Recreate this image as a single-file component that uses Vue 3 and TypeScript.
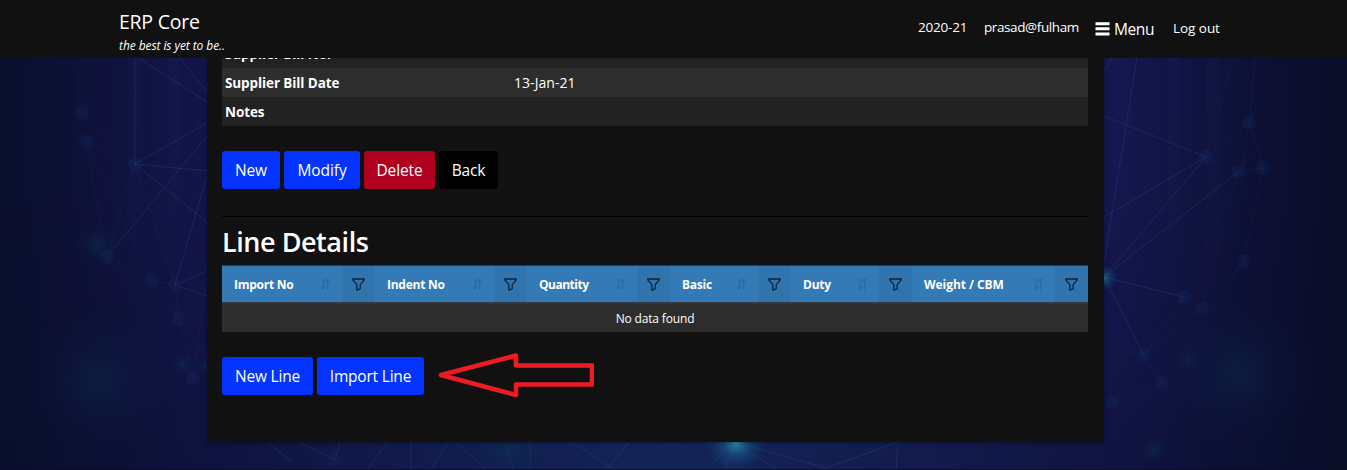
<script setup lang="ts">
interface Column {
  key: string
  label: string
}

interface Point {
  x: number
  y: number
}

const columns: Column[] = [
  { key: 'import', label: 'Import No' },
  { key: 'indent', label: 'Indent No' },
  { key: 'quantity', label: 'Quantity' },
  { key: 'basic', label: 'Basic' },
  { key: 'duty', label: 'Duty' },
  { key: 'weight', label: 'Weight / CBM' },
]

const details = [
  { label: 'Supplier Bill No.', value: '' },
  { label: 'Supplier Bill Date', value: '13-Jan-21' },
  { label: 'Notes', value: '' },
]

const nodes: Point[] = [
  { x: 86, y: 141 }, { x: 135, y: 164 }, { x: 107, y: 257 }, { x: 152, y: 281 },
  { x: 175, y: 285 }, { x: 179, y: 319 }, { x: 193, y: 378 }, { x: 82, y: 113 },
  { x: 1206, y: 157 }, { x: 1249, y: 122 }, { x: 1238, y: 172 }, { x: 1263, y: 168 },
  { x: 1244, y: 261 }, { x: 1184, y: 297 }, { x: 1202, y: 308 }, { x: 1144, y: 355 },
  { x: 1162, y: 383 }, { x: 1112, y: 403 }, { x: 335, y: 460 },
]

const outerMesh =
  'M135 164L86 141L152 281L175 285L135 164M135 164L107 257M82 113L135 164M107 257L152 281L179 319L193 378L205 285' +
  'M175 285L179 319L207 355M107 257L184 365M86 141L105 250M88 58L78 80V113' +
  'M1206 157L1249 122L1263 168L1238 172L1206 157M1238 172L1184 297L1144 355L1202 308L1238 172' +
  'M1144 355L1162 383L1112 403L1144 355L1104 382M1104 334L1144 355L1104 351M1162 383L1104 432' +
  'M1233 58L1206 157M1255 58L1249 122L1274 70M1249 122L1242 172M1238 172L1263 140M1263 168L1244 261L1202 308M1244 261L1162 383'

const innerMesh =
  'M135 58V164L207 123M135 164L207 222M135 164L207 171M107 257L207 136M139 58L207 102M180 58L207 92' +
  'M175 285L207 271M175 285L207 296M175 285L207 176' +
  'M1112 58L1104 70M1137 58L1104 262M1104 116L1206 157L1104 217M1206 157L1104 277L1238 172M1104 277L1184 297M1104 277L1144 355' +
  'M340 442L335 460M300 442L335 460M267 442L292 462M388 442L367 470M411 442V470' +
  'M449 442L430 470M456 442L486 470M504 442L514 470M530 442V470M573 442L614 470M629 442L608 468M734 442L705 470' +
  'M734 442L724 470M734 442L778 470M734 442L826 468L898 442M898 442L896 470'
</script>

<template>
  <div class="page">
    <svg class="backdrop" viewBox="0 0 1347 470" preserveAspectRatio="none">
      <defs>
        <linearGradient id="base">
          <stop offset="0" stop-color="#0a0f2d" />
          <stop offset=".06" stop-color="#0e1138" />
          <stop offset=".15" stop-color="#13154a" />
          <stop offset=".5" stop-color="#171d5a" />
          <stop offset=".83" stop-color="#15174e" />
          <stop offset=".92" stop-color="#0e1138" />
          <stop offset="1" stop-color="#090d28" />
        </linearGradient>
        <linearGradient id="shade" x2="0" y2="1">
          <stop offset=".4" stop-color="#070d28" stop-opacity="0" />
          <stop offset="1" stop-color="#070d28" stop-opacity=".35" />
        </linearGradient>
        <linearGradient id="strip" x2="0" y2="1">
          <stop offset="0" stop-color="#1b2d6c" stop-opacity=".12" />
          <stop offset="1" stop-color="#1b2d6c" stop-opacity="0" />
        </linearGradient>
        <linearGradient id="floor">
          <stop offset=".16" stop-color="#173064" stop-opacity="0" />
          <stop offset=".5" stop-color="#173064" stop-opacity=".5" />
          <stop offset=".82" stop-color="#173064" stop-opacity="0" />
        </linearGradient>
        <radialGradient id="haze">
          <stop offset="0" stop-color="#0b3450" stop-opacity=".75" />
          <stop offset=".5" stop-color="#0b2850" stop-opacity=".28" />
          <stop offset="1" stop-color="#0b2850" stop-opacity="0" />
        </radialGradient>
        <radialGradient id="spark">
          <stop offset="0" stop-color="#2ba1b5" />
          <stop offset=".4" stop-color="#1b5d8d" stop-opacity=".7" />
          <stop offset="1" stop-color="#163b78" stop-opacity="0" />
        </radialGradient>
      </defs>
      <rect width="1347" height="470" fill="url(#base)" />
      <rect width="1347" height="470" fill="url(#shade)" />
      <rect x="128" y="58" width="13" height="270" fill="url(#strip)" />
      <rect x="168" y="58" width="12" height="270" fill="url(#strip)" />
      <rect x="1168" y="58" width="12" height="270" fill="url(#strip)" />
      <rect x="1206" y="58" width="14" height="270" fill="url(#strip)" />
      <rect y="442" width="1347" height="28" fill="url(#floor)" />
      <path :d="outerMesh" fill="none" stroke="#3a63a0" stroke-opacity=".09" />
      <path :d="innerMesh" fill="none" stroke="#3f6ba8" stroke-opacity=".22" />
      <circle v-for="(n, i) in nodes" :key="i" :cx="n.x" :cy="n.y" r="7" fill="#17306c" opacity=".22" />
      <circle cx="97" cy="244" r="22" fill="url(#haze)" opacity=".65" />
      <circle cx="97" cy="380" r="72" fill="url(#haze)" opacity=".5" />
      <circle cx="183" cy="364" r="12" fill="url(#haze)" opacity=".8" />
      <circle cx="207" cy="366" r="11" fill="url(#haze)" opacity=".8" />
      <circle cx="1240" cy="375" r="74" fill="url(#haze)" opacity=".5" />
      <circle cx="1188" cy="360" r="13" fill="url(#haze)" opacity=".7" />
      <circle cx="1154" cy="450" r="14" fill="url(#haze)" opacity=".8" />
      <circle cx="1103" cy="278" r="14" fill="url(#spark)" opacity=".7" />
      <ellipse cx="510" cy="450" rx="46" ry="30" fill="url(#haze)" opacity=".8" />
      <circle cx="736" cy="442" r="30" fill="url(#spark)" opacity=".9" />
      <rect y="469" width="1347" height="1" fill="#0b0e24" />
    </svg>

    <header class="topbar">
      <div class="brand">
        <div class="brand-name">ERP Core</div>
        <div class="tagline">the best is yet to be..</div>
      </div>
      <nav class="nav">
        <span class="year">2020-21</span>
        <span class="user">prasad@fulham</span>
        <span class="menu">
          <svg width="15" height="14" viewBox="0 0 15 14">
            <path d="M.5 1.7h14M.5 6.8h14M.5 12h14" stroke="#fff" stroke-width="3" />
          </svg>
          <span class="menu-text">Menu</span>
        </span>
        <span class="logout">Log out</span>
      </nav>
    </header>

    <main class="panel">
      <dl class="details">
        <div v-for="d in details" :key="d.label" class="detail">
          <dt>{{ d.label }}</dt>
          <dd>{{ d.value }}</dd>
        </div>
      </dl>

      <div class="actions">
        <button class="btn new">New</button>
        <button class="btn modify">Modify</button>
        <button class="btn delete">Delete</button>
        <button class="btn back">Back</button>
      </div>

      <hr />
      <h3>Line Details</h3>

      <section class="grid">
        <div class="grid-head">
          <template v-for="c in columns" :key="c.key">
            <div class="head-cell">
              <span :class="['label', c.key]">{{ c.label }}</span>
              <svg class="sort" width="9" height="12" viewBox="0 0 9 12">
                <path d="M2.5 0V10.5M.3 8.5L2.5 11L4.5 8.5M6.5 12V1.5M4.5 3.5L6.5 1L8.7 3.5" fill="none" stroke="#286297" stroke-opacity=".65" stroke-width="1.3" />
              </svg>
            </div>
            <div class="filter-cell">
              <svg width="13" height="13" viewBox="0 0 13 13">
                <path d="M.8 1H12.2V1.8L8.2 6.6V10.8L4.8 12.2V6.6L.8 1.8Z" fill="none" stroke="#0d2234" stroke-width="1.3" stroke-linejoin="round" />
              </svg>
            </div>
          </template>
        </div>
        <div class="empty">No data found</div>
      </section>

      <div class="line-actions">
        <button class="btn new-line">New Line</button>
        <button class="btn import-line">Import Line</button>
        <svg class="arrow" width="158" height="46" viewBox="0 0 158 46">
          <path d="M5 23L80 3.500V13.500H156V32.500H80V43Z" fill="none" stroke="#ed1c24" stroke-width="4.600" stroke-linejoin="round" />
        </svg>
      </div>
    </main>
  </div>
</template>

<style>
body {
  margin: 0;
  background: #0d1034;
  overflow: hidden;
}
</style>

<style scoped>
* {
  box-sizing: border-box;
}
.page {
  position: relative;
  height: 470px;
  overflow: hidden;
  color: #fff;
  font: 14px/20px "Open Sans", "Noto Sans", sans-serif;
  white-space: nowrap;
}
.backdrop {
  position: absolute;
  inset: 0;
  width: 100%;
  height: 100%;
}
.topbar {
  position: relative;
  z-index: 2;
  display: flex;
  justify-content: space-between;
  height: 58px;
  padding: 0 127px 0 119px;
  background: #111;
}
.brand-name {
  margin-top: 8px;
  font-size: 19.500px;
  line-height: 28px;
  letter-spacing: -0.250px;
}
.tagline {
  margin-top: 1px;
  font-size: 12px;
  font-style: italic;
  font-weight: 500;
  line-height: 18px;
  letter-spacing: -0.080px;
}
.nav {
  display: flex;
  padding-top: 17px;
  font-size: 13.500px;
}
.year {
  width: 66px;
  letter-spacing: -0.200px;
}
.user {
  width: 111px;
  letter-spacing: -0.400px;
}
.menu {
  display: flex;
  width: 78px;
  gap: 4px;
}
.menu svg {
  margin-top: 5px;
}
.menu-text {
  margin-top: 2px;
  font-size: 15.500px;
  letter-spacing: -0.400px;
}
.logout {
  width: 47px;
  margin-top: 1px;
  letter-spacing: -0.050px;
}
.panel {
  position: relative;
  width: 897px;
  height: 403px;
  margin: -19px 0 0 207px;
  padding: 0 16px 0 15px;
  background: #111;
  box-shadow: 0 1px 4px rgba(0, 0, 0, 0.4);
}
.details {
  margin: 0;
}
.detail {
  display: grid;
  grid-template-columns: 289px 1fr;
  height: 29px;
  padding-left: 3px;
  background: #222;
  line-height: 29px;
}
.detail:nth-child(even) {
  background: #2d2d2d;
}
dt {
  padding-top: 1px;
  font-size: 13.500px;
  font-weight: 700;
  letter-spacing: -0.100px;
}
dd {
  margin: 0;
  font-size: 14px;
  letter-spacing: 0.050px;
}
.actions,
.line-actions {
  display: flex;
  gap: 4px;
  margin-top: 25px;
}
.btn {
  height: 38px;
  padding: 0;
  border: 0;
  border-radius: 3px;
  background: #0433ff;
  color: #fff;
  font: 15.500px/39px "Open Sans", "Noto Sans", sans-serif;
  letter-spacing: -0.200px;
}
.new { width: 58px; }
.modify { width: 76px; letter-spacing: -0.080px; }
.delete { width: 71px; background: #b00020; letter-spacing: -0.100px; }
.back { width: 59px; background: #000; }
.new-line { width: 91px; letter-spacing: -0.180px; }
.import-line { width: 107px; }
hr {
  height: 1px;
  margin: 27px 0 0;
  border: 0;
  background: #000;
}
h3 {
  height: 48px;
  margin: 0;
  font-size: 27px;
  font-weight: 600;
  line-height: 49px;
  letter-spacing: -0.450px;
}
.grid {
  border-top: 1px solid #32383e;
}
.grid-head {
  display: grid;
  grid-template-columns: 120px 33px 119px 33px 110px 33px 88px 33px 88px 33px 143px 33px;
  height: 38px;
  border-bottom: 2px solid #32383e;
}
.head-cell {
  display: flex;
  align-items: center;
  justify-content: space-between;
  padding: 0 12px;
  background: #337ab7;
  font-size: 12px;
  font-weight: 700;
  letter-spacing: -0.250px;
}
.filter-cell {
  display: flex;
  align-items: center;
  justify-content: center;
  background: #3074ae;
}
.label {
  padding-top: 2px;
}
.quantity {
  letter-spacing: -0.500px;
}
.weight {
  letter-spacing: -0.050px;
}
.empty {
  height: 28px;
  background: #2d2d2d;
  text-align: center;
  font-size: 12px;
  line-height: 29px;
  letter-spacing: -0.160px;
}
.arrow {
  margin: -5px 0 0 8px;
}
</style>
